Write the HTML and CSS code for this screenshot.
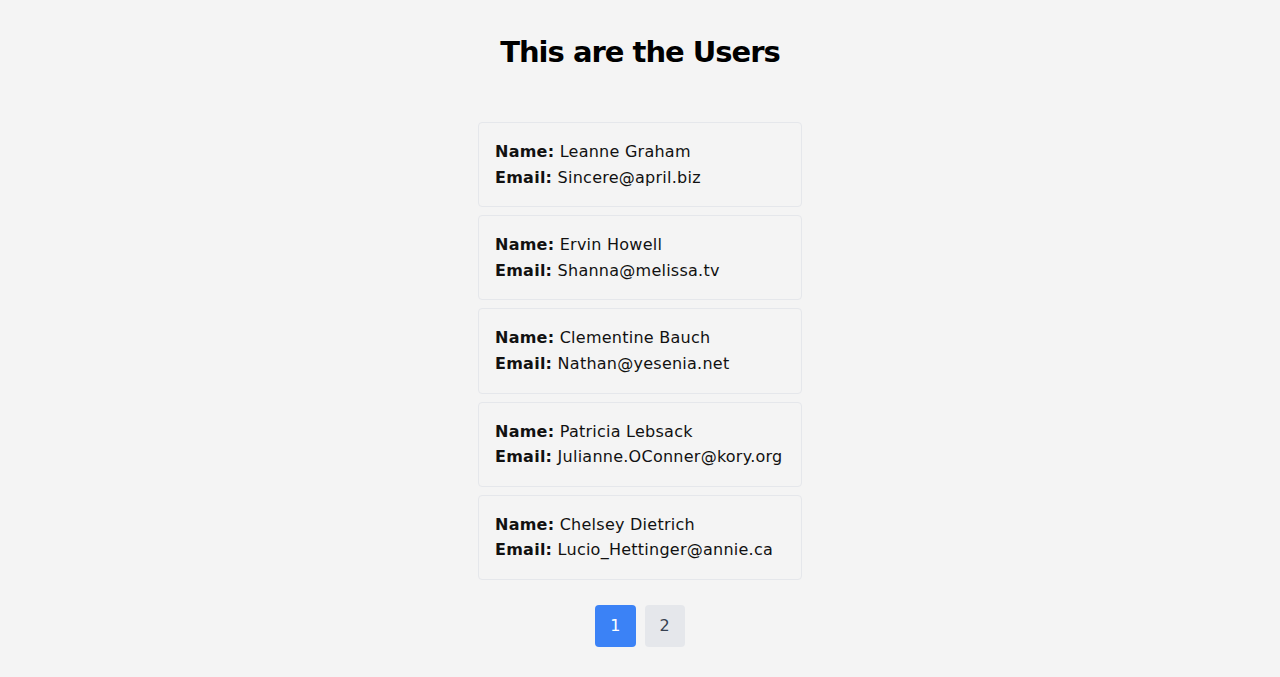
FILE: index.html
```html
<!DOCTYPE html>
<html lang="en">
<head>
<meta charset="utf-8">
<title>Users</title>
<link rel="stylesheet" href="styles.css">
</head>
<body>
<main class="page">
  <h1 class="title">This are the Users</h1>
  <ul class="users">
    <li class="card"><p><strong>Name:</strong> Leanne Graham</p><p><strong>Email:</strong> Sincere@april.biz</p></li>
    <li class="card"><p><strong>Name:</strong> Ervin Howell</p><p><strong>Email:</strong> Shanna@melissa.tv</p></li>
    <li class="card"><p><strong>Name:</strong> Clementine Bauch</p><p><strong>Email:</strong> Nathan@yesenia.net</p></li>
    <li class="card"><p><strong>Name:</strong> Patricia Lebsack</p><p><strong>Email:</strong> Julianne.OConner@kory.org</p></li>
    <li class="card"><p><strong>Name:</strong> Chelsey Dietrich</p><p><strong>Email:</strong> Lucio_Hettinger@annie.ca</p></li>
  </ul>
  <nav class="pager">
    <button class="page-btn active">1</button>
    <button class="page-btn">2</button>
  </nav>
</main>
</body>
</html>
```
FILE: styles.css
```css
html, body {
  margin: 0;
  padding: 0;
  background: #f4f4f4;
}
body {
  font-family: "DejaVu Sans", "Open Sans", sans-serif;
  color: #111;
}
.page {
  display: flex;
  flex-direction: column;
  align-items: center;
  padding-top: 34px;
}
.title {
  margin: 0;
  font-size: 29px;
  line-height: 36px;
  font-weight: 700;
  letter-spacing: -1px;
  color: #000;
}
.users {
  list-style: none;
  margin: 52px 0 0;
  padding: 0;
  width: 324px;
  display: flex;
  flex-direction: column;
  gap: 8px;
}
.card {
  box-sizing: border-box;
  border: 1px solid #e5e7eb;
  border-radius: 4px;
  padding: 16px;
  font-size: 16px;
  line-height: 1.6;
  letter-spacing: 0.25px;
}
.card p {
  margin: 0;
  white-space: nowrap;
}
.card strong {
  font-weight: 700;
}
.pager {
  display: flex;
  gap: 9px;
  margin-top: 25px;
}
.page-btn {
  box-sizing: border-box;
  height: 42px;
  padding: 0 15px;
  border: none;
  border-radius: 4px;
  background: #e5e7eb;
  color: #374151;
  font-family: inherit;
  font-size: 16px;
}
.page-btn.active {
  background: #3b82f6;
  color: #fff;
}
```
